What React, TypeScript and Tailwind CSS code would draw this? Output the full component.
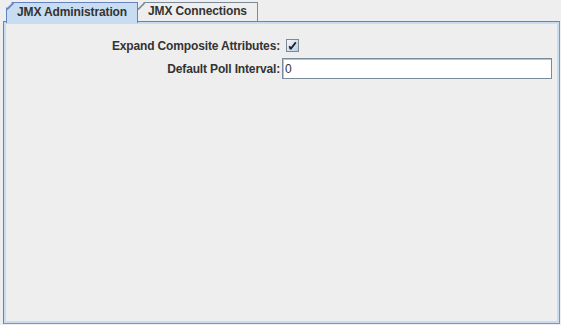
import React, { useState } from 'react';

const TabCorner: React.FC<{ color: string }> = ({ color }) => (
  <svg className="absolute left-0 top-0" width="7" height="7" viewBox="0 0 7 7">
    <line x1="0" y1="6.5" x2="6.5" y2="0" stroke={color} strokeWidth="1.6" />
  </svg>
);

const App: React.FC = () => {
  const [active, setActive] = useState<number>(0);
  const [expand, setExpand] = useState<boolean>(true);
  const [interval, setInterval] = useState<string>('0');

  const tabs = [
    { label: 'JMX Administration', width: 'w-[132px]' },
    { label: 'JMX Connections', width: 'w-[120px]' },
  ];

  return (
    <div
      className="w-[561px] h-[325px] bg-[#eeeeee] pt-[2px] pl-[3px] pr-[1px] text-[#333333] text-[12px] leading-none"
      style={{ fontFamily: '"Liberation Sans", Arial, sans-serif' }}
    >
      {/* Tab strip */}
      <div className="flex ml-[3px] h-[19px]">
        {tabs.map((tab, i) => {
          const selected = i === active;
          return (
            <button
              key={tab.label}
              onClick={() => setActive(i)}
              className={`relative ${tab.width} font-bold tracking-[-0.12px] flex items-center justify-center border-t border-l border-r ${
                selected
                  ? 'h-[21px] z-10 bg-[#c8ddf2] border-[#6382bf]'
                  : 'h-[19px] bg-[#eeeeee] border-[#7a8a99] border-l-0'
              }`}
              style={{ clipPath: 'polygon(6px 0, 100% 0, 100% 100%, 0 100%, 0 6px)' }}
            >
              <TabCorner color={selected ? '#6382bf' : '#7a8a99'} />
              <span className="pb-[2px]">{tab.label}</span>
            </button>
          );
        })}
      </div>

      {/* Content panel */}
      <div className="h-[303px] border border-[#6382bf] border-r-[#7d95bf] border-b-[#7d95bf]">
        <div className="h-full border-2 border-[#c8ddf2]">
          {active === 0 ? (
            <div className="grid grid-cols-[274px_1fr] gap-x-[2px] gap-y-[2px] pt-[11px] pr-[5px]">
              <div className="h-[21px] flex items-center justify-end font-bold tracking-[-0.15px]">
                Expand Composite Attributes:
              </div>
              <div className="h-[21px] flex items-center">
                <button
                  onClick={() => setExpand(!expand)}
                  className="ml-[4px] w-[13px] h-[13px] border border-[#7a8a99] bg-gradient-to-br from-[#f4f8fc] to-[#b8cfe5] flex items-center justify-center"
                >
                  {expand && (
                    <svg width="11" height="11" viewBox="0 0 11 11">
                      <path d="M2.2 6.2 L4 8.6 L8.8 2.4" fill="none" stroke="#222222" strokeWidth="1.8" />
                      <path d="M2.8 7.4 L4 8.8" fill="none" stroke="#222222" strokeWidth="2.2" />
                    </svg>
                  )}
                </button>
              </div>
              <div className="h-[21px] flex items-center justify-end font-bold tracking-[-0.15px]">
                Default Poll Interval:
              </div>
              <input
                type="text"
                value={interval}
                onChange={(e) => setInterval(e.target.value)}
                className="h-[21px] w-full bg-white border border-[#7a8a99] shadow-[inset_1px_1px_0_#b8c4cf] pl-[2px] text-[12px] text-[#333333] outline-none"
                style={{ fontFamily: '"Liberation Sans", Arial, sans-serif' }}
              />
            </div>
          ) : (
            <div />
          )}
        </div>
      </div>
    </div>
  );
};

export default App;
